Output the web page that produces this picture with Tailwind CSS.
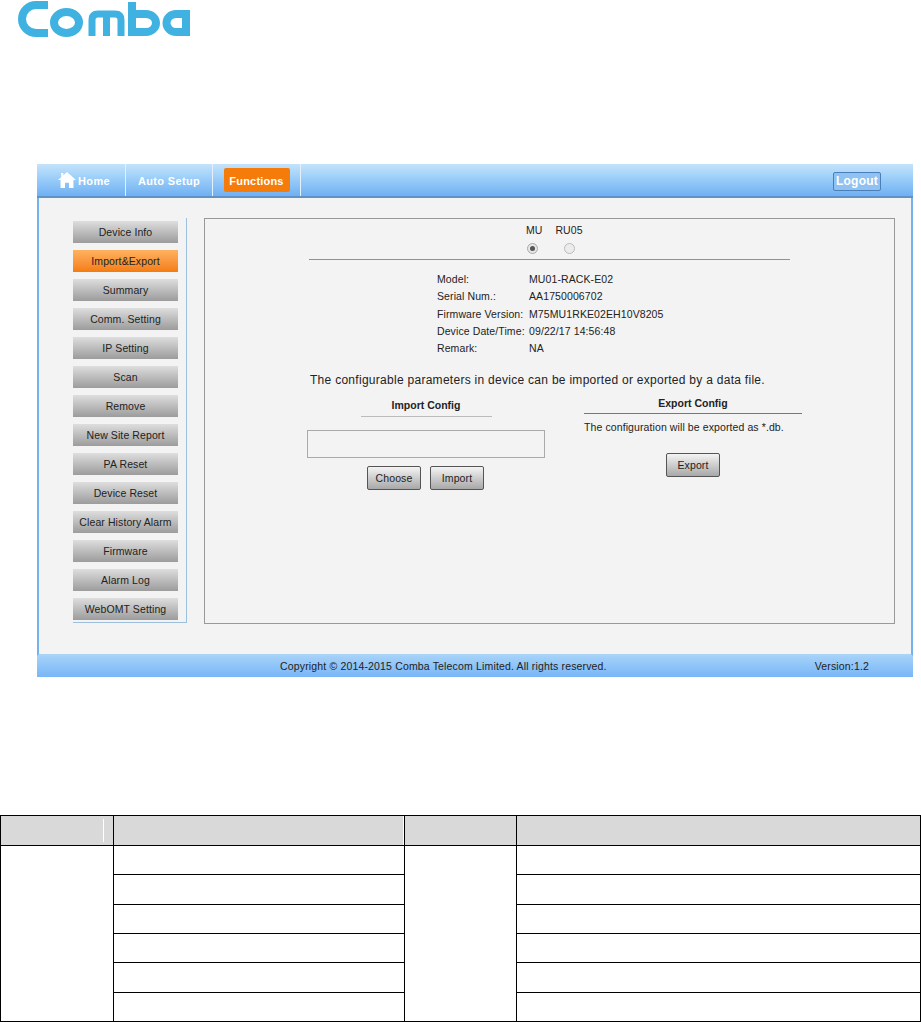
<!DOCTYPE html>
<html lang="en">
<head>
  <meta charset="UTF-8" />
  <meta name="viewport" content="width=device-width, initial-scale=1.0"/>
  <title>Import&amp;Export - Comba WebOMT</title>
  <script src="https://cdn.jsdelivr.net/npm/@tailwindcss/browser@4"></script>
</head>
<body class="bg-white font-['Liberation_Sans',Arial,sans-serif] text-[#222] overflow-hidden">
  <div class="w-[921px] h-[1022px] overflow-hidden">

    <!-- logo -->
    <div class="h-[164px] pl-[18px]">
      <svg width="174" height="39" viewBox="0 0 174 39" fill="none" stroke="#3fb2e2" stroke-width="8">
        <path d="M30 5 H18 A14 14 0 0 0 18 33 H30" />
        <ellipse cx="48.5" cy="22.5" rx="12.5" ry="10.5" />
        <path stroke-width="7" d="M74 36 V20 Q74 14 80 14 H97 Q103 14 103 20 V36 M88.5 14 V36" />
        <path d="M114 2 V32 H128 A10 9 0 0 0 128 14 H114" />
        <path d="M168 36 V14 H158 A9.5 9 0 0 0 158 32 H168" />
      </svg>
    </div>

    <!-- app window -->
    <div class="ml-[37px] w-[876px] h-[513px] flex flex-col">
      <nav class="h-[34px] flex bg-gradient-to-b from-[#c4e3fb] via-[#97cbf8] to-[#6fb0f2] border-b-2 border-[#5f93c6] text-white font-bold text-[11px] tracking-[0.35px]">
        <a class="w-[89px] flex items-center justify-center gap-[2px] border-r border-[#e4f1fc] pl-[6px]">
          <svg width="18" height="16" viewBox="0 0 17 15" fill="#fff"><path d="M8.5 0 L17 7.5 L14.6 7.5 L14.6 15 L10.4 15 L10.4 10 L6.6 10 L6.6 15 L2.4 15 L2.4 7.5 L0 7.5 L3 4.8 L3 1 L5 1 L5 3 Z" /></svg>
          <span class="pt-[2px]">Home</span>
        </a>
        <a class="w-[87px] flex items-center justify-center border-r border-[#e4f1fc] pt-[2px]">Auto Setup</a>
        <div class="w-[88px] flex items-center justify-center border-r border-[#e4f1fc]">
          <a class="w-[66px] h-[24px] rounded-[2px] bg-[#f57c0a] flex items-center justify-center tracking-[0.2px] pt-[2px]">Functions</a>
        </div>
        <div class="flex-1 flex items-center justify-end pr-[32px]">
          <a class="w-[48px] h-[19px] mt-[2px] rounded-[2px] border border-[#4a7fb8] bg-[#8fc2f2] flex items-center justify-center text-[12px] tracking-[0.2px]">Logout</a>
        </div>
      </nav>

      <main class="h-[458px] flex bg-[#f3f3f3] border-x-2 border-[#74b2ee] border-b-2 border-b-[#a9d3f5] pl-[34px] pt-[20px]">
        <!-- side menu -->
        <aside class="w-[114px] h-[405px] pt-[3px] border-r border-b border-[#9dbfdc] flex flex-col gap-[7px] text-[10.5px] tracking-[0.1px] text-center">
          <a class="w-[105px] h-[22px] leading-[22px] bg-gradient-to-b from-[#dedede] to-[#9c9c9c]">Device Info</a>
          <a class="w-[105px] h-[22px] leading-[22px] bg-gradient-to-b from-[#fdb25e] to-[#f57c0a]">Import&amp;Export</a>
          <a class="w-[105px] h-[22px] leading-[22px] bg-gradient-to-b from-[#dedede] to-[#9c9c9c]">Summary</a>
          <a class="w-[105px] h-[22px] leading-[22px] bg-gradient-to-b from-[#dedede] to-[#9c9c9c]">Comm. Setting</a>
          <a class="w-[105px] h-[22px] leading-[22px] bg-gradient-to-b from-[#dedede] to-[#9c9c9c]">IP Setting</a>
          <a class="w-[105px] h-[22px] leading-[22px] bg-gradient-to-b from-[#dedede] to-[#9c9c9c]">Scan</a>
          <a class="w-[105px] h-[22px] leading-[22px] bg-gradient-to-b from-[#dedede] to-[#9c9c9c]">Remove</a>
          <a class="w-[105px] h-[22px] leading-[22px] bg-gradient-to-b from-[#dedede] to-[#9c9c9c]">New Site Report</a>
          <a class="w-[105px] h-[22px] leading-[22px] bg-gradient-to-b from-[#dedede] to-[#9c9c9c]">PA Reset</a>
          <a class="w-[105px] h-[22px] leading-[22px] bg-gradient-to-b from-[#dedede] to-[#9c9c9c]">Device Reset</a>
          <a class="w-[105px] h-[22px] leading-[22px] bg-gradient-to-b from-[#dedede] to-[#9c9c9c] whitespace-nowrap">Clear History Alarm</a>
          <a class="w-[105px] h-[22px] leading-[22px] bg-gradient-to-b from-[#dedede] to-[#9c9c9c]">Firmware</a>
          <a class="w-[105px] h-[22px] leading-[22px] bg-gradient-to-b from-[#dedede] to-[#9c9c9c]">Alarm Log</a>
          <a class="w-[105px] h-[22px] leading-[22px] bg-gradient-to-b from-[#dedede] to-[#9c9c9c]">WebOMT Setting</a>
        </aside>

        <!-- panel -->
        <section class="ml-[17px] w-[691px] h-[406px] border border-[#999] text-[10.5px] tracking-[0.1px]">
          <div class="flex justify-center pl-[10px] pt-[5px] gap-[14px] leading-[12px]">
            <span class="w-[15px] text-center">MU</span>
            <span class="w-[28px] text-center">RU05</span>
          </div>
          <div class="flex justify-center pl-[2px] pt-[7px] gap-[26px]">
            <span class="w-[11px] h-[11px] rounded-full border border-[#aaa] bg-[#e6e6e6] flex items-center justify-center"><span class="w-[5px] h-[5px] rounded-full bg-[#555]"></span></span>
            <span class="w-[11px] h-[11px] rounded-full border border-[#bbb] bg-[#ececec]"></span>
          </div>
          <div class="ml-[104px] w-[481px] h-px mt-[5px] bg-[#5f9fd0]"></div>

          <dl class="ml-[232px] mt-[11px] grid grid-cols-[92px_1fr] auto-rows-[17.3px] leading-[17px] whitespace-nowrap">
            <dt>Model:</dt><dd>MU01-RACK-E02</dd>
            <dt>Serial Num.:</dt><dd>AA1750006702</dd>
            <dt>Firmware Version:</dt><dd>M75MU1RKE02EH10V8205</dd>
            <dt>Device Date/Time:</dt><dd>09/22/17 14:56:48</dd>
            <dt>Remark:</dt><dd>NA</dd>
          </dl>

          <p class="ml-[105px] mt-[16px] text-[12px] tracking-[0.28px] leading-[14px] whitespace-nowrap">The configurable parameters in device can be imported or exported by a data file.</p>

          <div class="flex mt-[9px]">
            <div class="ml-[102px] w-[238px] flex flex-col items-center">
              <h3 class="font-bold text-[10.5px] tracking-normal leading-[12px] mt-[3px]">Import Config</h3>
              <div class="w-[131px] mt-[5px] border-t border-[#bbb]"></div>
              <div class="w-[238px] h-[28px] mt-[13px] border border-[#aaa]"></div>
              <div class="flex gap-[9px] mt-[8px] -ml-[1px]">
                <button class="w-[54px] h-[24px] rounded-[2px] border border-[#555] bg-gradient-to-b from-[#f4f4f4] to-[#a8a8a8]">Choose</button>
                <button class="w-[54px] h-[24px] rounded-[2px] border border-[#555] bg-gradient-to-b from-[#f4f4f4] to-[#a8a8a8]">Import</button>
              </div>
            </div>
            <div class="ml-[39px] w-[218px] flex flex-col items-center">
              <h3 class="font-bold text-[10.5px] tracking-normal leading-[12px] mt-[1px]">Export Config</h3>
              <div class="w-[218px] mt-[4px] border-t border-[#777]"></div>
              <p class="w-full mt-[7px] leading-[12px] whitespace-nowrap">The configuration will be exported as *.db.</p>
              <button class="w-[54px] h-[24px] mt-[20px] rounded-[2px] border border-[#555] bg-gradient-to-b from-[#f4f4f4] to-[#a8a8a8]">Export</button>
            </div>
          </div>
        </section>
      </main>

      <footer class="h-[21px] flex items-center bg-gradient-to-b from-[#a4d1f9] to-[#78b6f7] text-[10.5px] tracking-[0.16px] whitespace-nowrap">
        <span class="ml-[243px]">Copyright © 2014-2015 Comba Telecom Limited. All rights reserved.</span>
        <span class="ml-auto mr-[44px]">Version:1.2</span>
      </footer>
    </div>

    <!-- empty spec table -->
    <table class="mt-[138px] w-[921px] h-[207px] table-fixed border-collapse border border-black">
      <colgroup>
        <col class="w-[113px]" />
        <col class="w-[291px]" />
        <col class="w-[112px]" />
        <col />
      </colgroup>
      <thead>
        <tr class="h-[30px] bg-[#d9d9d9]">
          <th class="border border-black relative"><span class="absolute left-[102px] top-[3px] bottom-[3px] w-px bg-white"></span></th>
          <th class="border border-black relative"><span class="absolute right-0 top-0 bottom-0 w-px bg-white"></span></th>
          <th class="border border-black"></th>
          <th class="border border-black"></th>
        </tr>
      </thead>
      <tbody>
        <tr class="h-[29px]">
          <td rowspan="6" class="border border-black"></td>
          <td class="border border-black"></td>
          <td rowspan="6" class="border border-black"></td>
          <td class="border border-black"></td>
        </tr>
        <tr class="h-[30px]"><td class="border border-black"></td><td class="border border-black"></td></tr>
        <tr class="h-[29px]"><td class="border border-black"></td><td class="border border-black"></td></tr>
        <tr class="h-[29px]"><td class="border border-black"></td><td class="border border-black"></td></tr>
        <tr class="h-[30px]"><td class="border border-black"></td><td class="border border-black"></td></tr>
        <tr class="h-[29px]"><td class="border border-black"></td><td class="border border-black"></td></tr>
      </tbody>
    </table>
  </div>
</body>
</html>
